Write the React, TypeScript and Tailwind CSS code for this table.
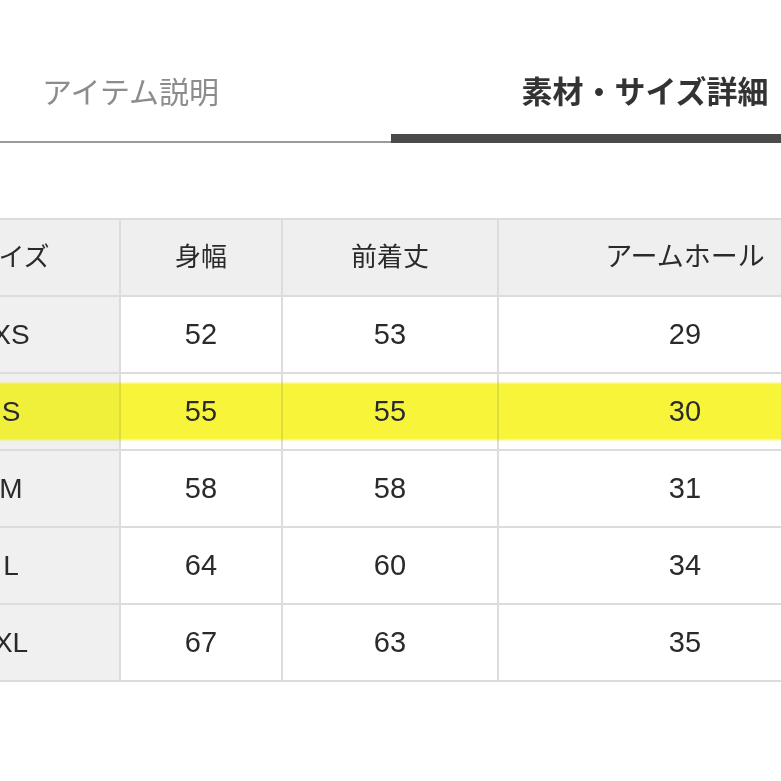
import React from "react";

const rows = [
  ["XS", "52", "53", "29"],
  ["S", "55", "55", "30"],
  ["M", "58", "58", "31"],
  ["L", "64", "60", "34"],
  ["XL", "67", "63", "35"],
];

const font = { fontFamily: '"Liberation Sans", "Noto Sans CJK JP", sans-serif' };

export default function App() {
  return (
    <div className="w-[781px] h-[781px] overflow-hidden bg-white relative" style={font}>
      {/* Tabs */}
      <div className="flex ml-[-130px] h-[143px] w-[1029px]">
        <div className="w-[521px] shrink-0 h-[143px] border-b-2 border-[#9a9a9a] flex justify-center">
          <div className="mt-[75px] h-[36px] leading-[36px] text-[30px] text-[#8c8c8c] whitespace-nowrap">アイテム説明</div>
        </div>
        <div className="w-[508px] shrink-0 h-[143px] border-b-[9px] border-[#4a4a4a] flex justify-center">
          <div className="mt-[75px] h-[36px] leading-[36px] text-[31px] font-bold text-[#333333] whitespace-nowrap">素材・サイズ詳細</div>
        </div>
      </div>

      {/* Table */}
      <div className="mt-[75px] ml-[-99px] w-[980px] bg-[#dcdcdc] p-[2px] grid grid-cols-[216px_160px_214px_372px] auto-rows-[75px] gap-[2px]">
        <div className="bg-[#efefef] flex items-center justify-center text-[26px] text-[#2a2a2a] whitespace-nowrap">サイズ</div>
        <div className="bg-[#efefef] flex items-center justify-center text-[26px] text-[#2a2a2a] whitespace-nowrap">身幅</div>
        <div className="bg-[#efefef] flex items-center justify-center text-[26px] text-[#2a2a2a] whitespace-nowrap">前着丈</div>
        <div className="bg-[#efefef] flex items-center justify-center text-[27px] text-[#2a2a2a] whitespace-nowrap">アームホール</div>
        {rows.map((r) => (
          <React.Fragment key={r[0]}>
            <div className="bg-[#f0f0f0] flex items-center justify-center text-[28px] text-[#2a2a2a]">{r[0]}</div>
            <div className="bg-white flex items-center justify-center text-[29px] text-[#2a2a2a]">{r[1]}</div>
            <div className="bg-white flex items-center justify-center text-[29px] text-[#2a2a2a]">{r[2]}</div>
            <div className="bg-white flex items-center justify-center text-[29px] text-[#2a2a2a]">{r[3]}</div>
          </React.Fragment>
        ))}
      </div>

      {/* Highlighter stroke */}
      <div className="absolute left-[-6px] top-[383px] w-[800px] h-[57px] bg-[#f7f43a] mix-blend-darken rounded-[6px] blur-[1px] pointer-events-none" />
    </div>
  );
}
